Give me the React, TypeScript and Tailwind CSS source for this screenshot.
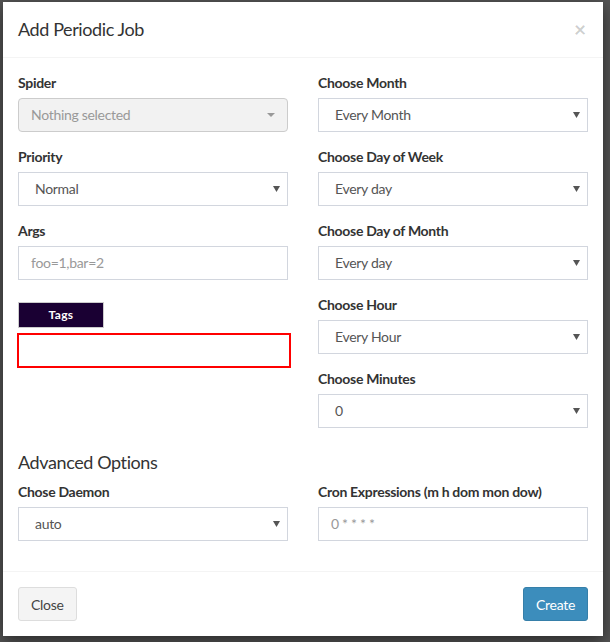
import React from 'react';

const font = { fontFamily: 'Lato, "Noto Sans", sans-serif' };

function Caret() {
  return (
    <svg width="7" height="6" viewBox="0 0 7 6" className="shrink-0">
      <path d="M0 0 H7 L3.5 6 Z" fill="#555" />
    </svg>
  );
}

function Label({ children }: { children: React.ReactNode }) {
  return (
    <label className="block mb-[5px] text-[14px] leading-[20px] font-bold text-[#333]">
      {children}
    </label>
  );
}

function Select({ value }: { value: string }) {
  return (
    <div className="h-[34px] border border-[#d2d6de] bg-white flex items-center justify-between pl-[16px] pr-[7px] pb-[1px] text-[14px] text-[#555]">
      <span>{value}</span>
      <Caret />
    </div>
  );
}

function Field({ label, children }: { label: string; children: React.ReactNode }) {
  return (
    <div className="mb-[15px]">
      <Label>{label}</Label>
      {children}
    </div>
  );
}

export default function App() {
  return (
    <div
      className="h-screen w-full bg-[#545454] pt-[2px] pl-[3px] overflow-hidden tracking-[-0.3px]"
      style={font}
    >
      <div className="w-[600px] bg-white text-[#333] shadow-[0_5px_15px_rgba(0,0,0,0.5)]">
        <div className="flex items-start justify-between p-[15px] border-b border-[#f4f4f4]">
          <h4 className="text-[18px] leading-[25px] text-[#333] tracking-[-0.4px]">Add Periodic Job</h4>
          <button className="text-[21px] leading-[20px] font-bold text-[#000]/20 mt-[2px] mr-[2px]">×</button>
        </div>

        <div className="p-[15px]">
          <div className="grid grid-cols-2 gap-x-[30px]">
            <div className="flex flex-col">
              <Field label="Spider">
                <div className="h-[34px] rounded-[4px] border border-[#ccc] bg-[#f2f2f2] flex items-center justify-between pl-[12px] pr-[12px] pb-[1px] text-[14px] text-[#999]">
                  <span>Nothing selected</span>
                  <svg width="8" height="4" viewBox="0 0 8 4">
                    <path d="M0 0 H8 L4 4 Z" fill="#999" />
                  </svg>
                </div>
              </Field>
              <Field label="Priority">
                <Select value="Normal" />
              </Field>
              <Field label="Args">
                <div className="h-[34px] border border-[#d2d6de] flex items-center px-[12px] pb-[1px] text-[14px] text-[#999]">
                  foo=1,bar=2
                </div>
              </Field>
              <div className="mt-[7px] w-[86px] h-[26px] bg-[#1a0033] border border-[#ccc] flex items-center justify-center text-white text-[12px] font-bold tracking-[0.3px]">
                Tags
              </div>
              <div className="mt-[5px] -ml-[1px] w-[274px] h-[35px] border-2 border-[#ff0000]" />
            </div>

            <div className="flex flex-col">
              <Field label="Choose Month">
                <Select value="Every Month" />
              </Field>
              <Field label="Choose Day of Week">
                <Select value="Every day" />
              </Field>
              <Field label="Choose Day of Month">
                <Select value="Every day" />
              </Field>
              <Field label="Choose Hour">
                <Select value="Every Hour" />
              </Field>
              <Field label="Choose Minutes">
                <Select value="0" />
              </Field>
            </div>
          </div>

          <h4 className="mt-[9px] mb-[10px] text-[18px] leading-[20px] text-[#333] tracking-[-0.4px]">Advanced Options</h4>

          <div className="grid grid-cols-2 gap-x-[30px]">
            <Field label="Chose Daemon">
              <Select value="auto" />
            </Field>
            <Field label="Cron Expressions (m h dom mon dow)">
              <div className="h-[34px] border border-[#d2d6de] flex items-center px-[12px] pb-[1px] text-[14px] text-[#999]">
                0 * * * *
              </div>
            </Field>
          </div>
        </div>

        <div className="flex justify-between p-[15px] border-t border-[#f4f4f4]">
          <button className="h-[34px] px-[12px] rounded-[3px] bg-[#f4f4f4] border border-[#ddd] text-[14px] text-[#444]">
            Close
          </button>
          <button className="h-[34px] px-[12px] rounded-[3px] bg-[#3c8dbc] border border-[#367fa9] text-[14px] text-white">
            Create
          </button>
        </div>
      </div>
    </div>
  );
}
